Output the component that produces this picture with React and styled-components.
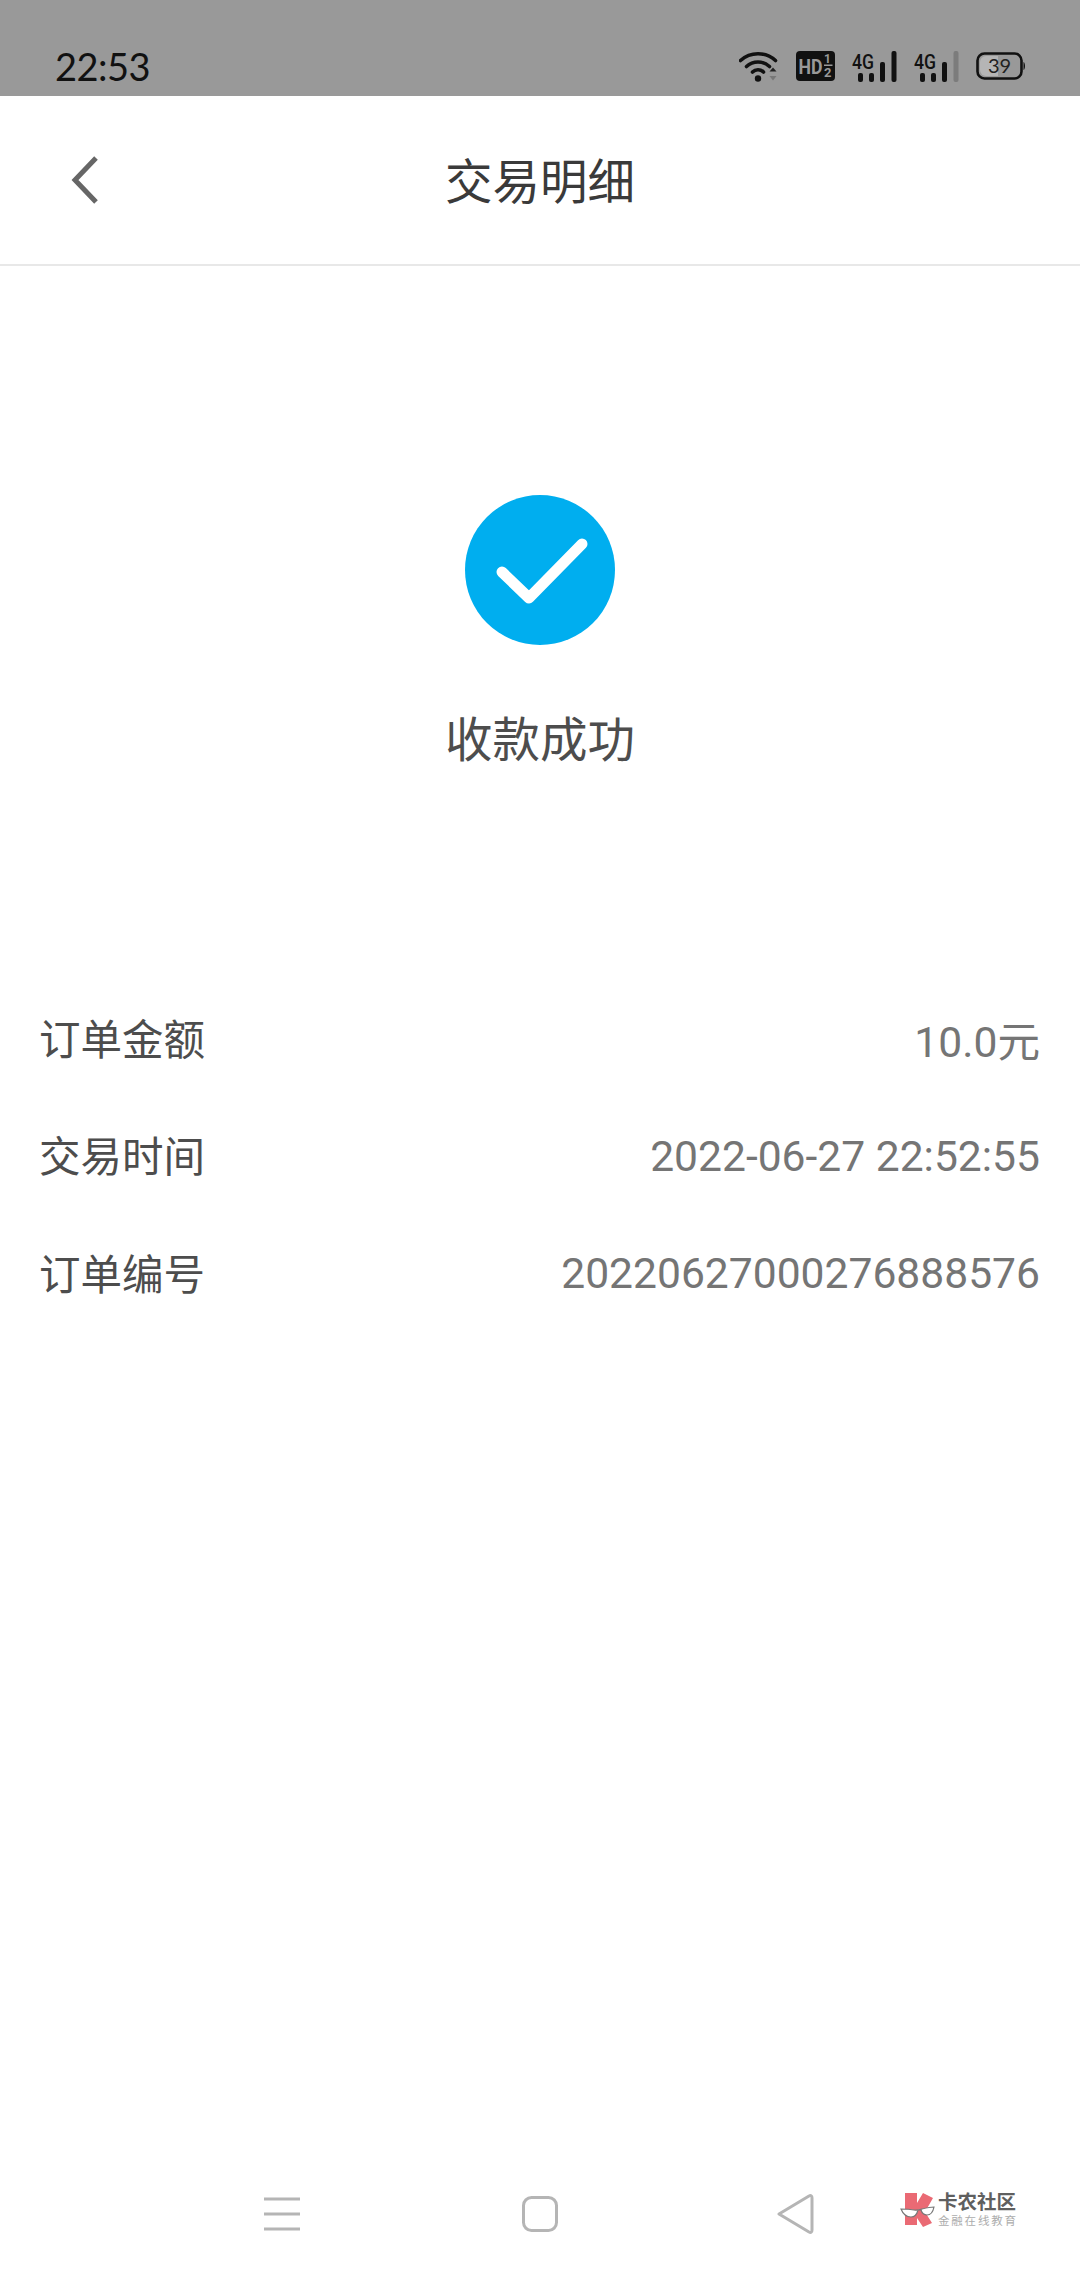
import React from 'react';
import styled, { createGlobalStyle } from 'styled-components';

const Global = createGlobalStyle`
html, body {
  margin: 0;
  padding: 0;
  background: #fff;
}
`

const CJK = `Roboto, "Noto Sans CJK SC", sans-serif`

const Page = styled.div`
position: relative;
display: flex;
flex-direction: column;
width: 1080px;
height: 2280px;
overflow: hidden;
background: #fff;
font-family: ${CJK};
`

const StatusBar = styled.div`
display: flex;
justify-content: space-between;
align-items: center;
height: 96px;
box-sizing: border-box;
padding: 36px 54px 0 55px;
background: #999999;
flex-shrink: 0;
`

const Clock = styled.div`
font-family: Lato, Roboto, sans-serif;
font-size: 38px;
line-height: 44px;
color: #111;
letter-spacing: -0.5px;
`

const StatusIcons = styled.div`
display: flex;
align-items: center;
gap: 17px;
`

const Header = styled.div`
position: relative;
display: flex;
align-items: center;
justify-content: center;
height: 168px;
border-bottom: 2px solid #e8e8e8;
flex-shrink: 0;
`

const BackButton = styled.svg`
position: absolute;
left: 71px;
top: 60px;
`

const Title = styled.div`
padding-top: 5px;
font-size: 47.5px;
line-height: 60px;
color: #3a3a3a;
`

const Result = styled.div`
display: flex;
flex-direction: column;
align-items: center;
padding-top: 229px;
`

const Caption = styled.div`
margin-top: 66px;
font-size: 47.5px;
line-height: 60px;
color: #4d4d4d;
`

const Details = styled.div`
display: flex;
flex-direction: column;
padding: 207px 40px 0 39px;
`

const Row = styled.div`
display: flex;
justify-content: space-between;
align-items: center;
height: 117.5px;
`

const Label = styled.span`
font-size: 41.5px;
color: #4d4d4d;
`

const Value = styled.span`
padding-top: 3px;
font-size: 42.6px;
color: #757575;
`

const NavBar = styled.div`
position: absolute;
left: 0;
right: 0;
bottom: 42px;
display: flex;
align-items: center;
height: 48px;
padding-left: 264px;
`

const NavIcon = styled.svg`
display: block;
margin-right: ${p => p.$gap}px;
`

const Watermark = styled.div`
position: absolute;
left: 900px;
top: 2192px;
display: flex;
align-items: center;
gap: 2px;
`

const WatermarkText = styled.div`
display: flex;
flex-direction: column;
gap: 2px;
`

const BrandName = styled.div`
font-size: 19.5px;
line-height: 20px;
font-weight: 700;
color: #5f5f5f;
white-space: nowrap;
`

const BrandSub = styled.div`
font-size: 11.5px;
line-height: 13px;
letter-spacing: 1.8px;
color: #adadad;
white-space: nowrap;
`

const Wifi = () => (
  <svg width="40" height="31" viewBox="0 0 40 31" fill="none">
    <path d="M1.5 9.5C11.5 .5 26.5 .5 36.5 9.5" stroke="#111" strokeWidth="3.6" strokeLinecap="round" />
    <path d="M7.5 15.5C14 9.5 24 9.5 30.5 15.5" stroke="#111" strokeWidth="3.6" strokeLinecap="round" />
    <path d="M13.5 21C16.5 18 21.5 18 24.5 21" stroke="#111" strokeWidth="3.6" strokeLinecap="round" />
    <circle cx="19" cy="27.5" r="3.2" fill="#111" />
    <path d="M30.5 20.5l3.5-4 3.5 4z" fill="#222" />
    <path d="M30.5 25l3.5 4.5 3.5-4.5z" fill="#777" />
  </svg>
)

const HdBadge = () => (
  <svg width="39" height="30" viewBox="0 0 39 30">
    <rect width="39" height="30" rx="4" fill="#111" />
    <text x="2.500" y="23" fontFamily="Roboto, sans-serif" fontWeight="700" fontSize="21" textLength="24" lengthAdjust="spacingAndGlyphs" fill="#999">HD</text>
    <text x="28" y="12" fontFamily="Roboto, sans-serif" fontWeight="700" fontSize="12" fill="#999">1</text>
    <rect x="28" y="13.500" width="8.500" height="1.500" fill="#999" />
    <text x="28" y="26" fontFamily="Roboto, sans-serif" fontWeight="700" fontSize="13" fill="#999">2</text>
  </svg>
)

const Signal = ({ lastColor }) => (
  <svg width="45" height="31" viewBox="0 0 45 31">
    <text x="0" y="18" fontFamily="Roboto, sans-serif" fontWeight="500" fontSize="20" textLength="22" lengthAdjust="spacingAndGlyphs" fill="#111">4G</text>
    <rect x="6" y="22" width="5" height="9" rx="2" fill="#111" />
    <rect x="17" y="22" width="5" height="9" rx="2" fill="#111" />
    <rect x="28" y="11" width="5" height="20" rx="2" fill="#111" />
    <rect x="39.500" y="0" width="5" height="31" rx="2" fill={lastColor} />
  </svg>
)

const Battery = () => (
  <svg width="50" height="28" viewBox="0 0 50 28">
    <rect x="1.500" y="1.500" width="44" height="25" rx="7" fill="none" stroke="#111" strokeWidth="2.600" />
    <path d="M4 10a6 6 0 0 1 6-6h12v20H10a6 6 0 0 1-6-6z" fill="#b5b5b5" />
    <path d="M47.500 10c2 1 2 7 0 8z" fill="#111" />
    <text x="23.500" y="21" fontFamily="Lato, Roboto, sans-serif" fontWeight="400" fontSize="20" textAnchor="middle" fill="#222">39</text>
  </svg>
)

const CheckCircle = () => (
  <svg width="150" height="150" viewBox="0 0 150 150">
    <circle cx="75" cy="75" r="75" fill="#00aeef" />
    <path d="M37 77L64 103L117 49" fill="none" stroke="#fff" strokeWidth="11" strokeLinecap="round" strokeLinejoin="round" />
  </svg>
)

const Logo = () => (
  <svg width="36" height="36" viewBox="0 0 36 36">
    <path d="M5 1h12v10l6-10 10 5-8 14 7 11-9 4-6-9v7H5z" fill="#ea6a74" />
    <path d="M1 17c4 0 8 0 13 1 3 .5 5 0 8-1 4-1 8-2 12-2-1 5-3 8-7 8-3 0-5-2-6-5h-3c-1 4-3 7-7 7-5 0-8-3-10-8z" fill="#fff" stroke="#777" strokeWidth="1.200" />
  </svg>
)

const rows = [
  ['订单金额', '10.0元'],
  ['交易时间', '2022-06-27 22:52:55'],
  ['订单编号', '20220627000276888576'],
]

const App = () => {
  return (
    <Page>
      <Global />
      <StatusBar>
        <Clock>22:53</Clock>
        <StatusIcons>
          <Wifi />
          <HdBadge />
          <Signal lastColor="#111" />
          <Signal lastColor="#7c7c7c" />
          <Battery />
        </StatusIcons>
      </StatusBar>
      <Header>
        <BackButton width="28" height="48" viewBox="0 0 28 48" fill="none">
          <path d="M25 2L4 24L25 46" stroke="#666" strokeWidth="5" />
        </BackButton>
        <Title>交易明细</Title>
      </Header>
      <Result>
        <CheckCircle />
        <Caption>收款成功</Caption>
      </Result>
      <Details>
        {rows.map(([label, value]) => (
          <Row key={label}>
            <Label>{label}</Label>
            <Value>{value}</Value>
          </Row>
        ))}
      </Details>
      <NavBar>
        <NavIcon $gap={222} width="36" height="34" viewBox="0 0 36 34">
          <path d="M0 2h36M0 17h36M0 32h36" stroke="#b5b5b5" strokeWidth="3" />
        </NavIcon>
        <NavIcon $gap={218} width="36" height="36" viewBox="0 0 36 36" fill="none">
          <rect x="1.500" y="1.500" width="33" height="33" rx="8" stroke="#b5b5b5" strokeWidth="3" />
        </NavIcon>
        <NavIcon width="38" height="40" viewBox="0 0 38 40" fill="none">
          <path d="M3 20L33 2c2-1 3 0 3 2v32c0 2-1 3-3 2z" stroke="#b5b5b5" strokeWidth="3" strokeLinejoin="round" />
        </NavIcon>
      </NavBar>
      <Watermark>
        <Logo />
        <WatermarkText>
          <BrandName>卡农社区</BrandName>
          <BrandSub>金融在线教育</BrandSub>
        </WatermarkText>
      </Watermark>
    </Page>
  )
}

export default App;
